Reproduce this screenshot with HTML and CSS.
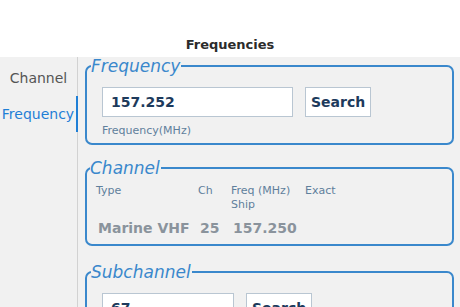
FILE: index.html
```html
<!DOCTYPE html>
<html lang="en">
<head>
    <meta charset="UTF-8">
    <meta name="viewport" content="width=device-width, initial-scale=1.0">
    <title>Frequencies</title>
    <link rel="stylesheet" href="styles.css">
</head>
<body>
    <div class="header">
        <h1>Frequencies</h1>
    </div>

    <div class="main">
        <div class="sidebar">
            <div class="tab">Channel</div>
            <div class="tab active">Frequency</div>
        </div>

        <div class="content">
            <fieldset class="group frequency">
                <legend>Frequency</legend>
                <div class="search-row">
                    <input type="text" class="field wide" value="157.252">
                    <button class="btn">Search</button>
                </div>
                <p class="hint">Frequency(MHz)</p>
            </fieldset>

            <fieldset class="group channel">
                <legend>Channel</legend>
                <div class="channel-table">
                    <div class="th">Type</div>
                    <div class="th">Ch</div>
                    <div class="th">Freq (MHz)<br>Ship</div>
                    <div class="th">Exact</div>
                    <div class="td">Marine VHF</div>
                    <div class="td">25</div>
                    <div class="td">157.250</div>
                    <div class="td"></div>
                </div>
            </fieldset>

            <fieldset class="group">
                <legend>Subchannel</legend>
                <div class="search-row">
                    <input type="text" class="field narrow" value="67">
                    <button class="btn">Search</button>
                </div>
            </fieldset>
        </div>
    </div>
</body>
</html>
```

FILE: styles.css
```css
:root {
    --blue: #3a88cc;
    --tab-blue: #1f7fd6;
    --navy: #1d3a5c;
    --label: #5f7f9c;
    --value: #8a939c;
    --bg: #f1f1f1;
}

* {
    box-sizing: border-box;
    margin: 0;
    padding: 0;
}

html, body {
    height: 100%;
}

body {
    font-family: 'DejaVu Sans', sans-serif;
    background-color: var(--bg);
    color: #333;
    overflow: hidden;
}

.header {
    height: 57px;
    background: white;
    text-align: center;
    padding-top: 37px;
}

h1 {
    font-size: 13px;
    font-weight: 700;
    color: #2b2b2b;
    line-height: 16px;
}

.main {
    display: flex;
    height: 250px;
}

.sidebar {
    width: 78px;
    border-right: 1px solid #d2d2d2;
    padding-top: 3px;
    flex-shrink: 0;
}

.tab {
    height: 36px;
    line-height: 36px;
    text-align: center;
    font-size: 14px;
    color: #555;
}

.tab.active {
    color: var(--tab-blue);
    border-right: 2px solid var(--tab-blue);
    margin-right: -1px;
}

.content {
    flex: 1;
    padding: 0 6px 0 7px;
}

.group {
    border: 2px solid var(--blue);
    border-radius: 7px;
    padding: 12px 16px 5px 15px;
    margin-bottom: 17px;
}

.group.frequency {
    margin-bottom: 14px;
}

.group legend {
    font-family: 'DejaVu Sans', sans-serif;
    font-style: italic;
    font-size: 17px;
    line-height: 18px;
    color: var(--blue);
    margin-left: -11px;
    padding: 0 1px 0 0;
}

.search-row {
    display: flex;
    gap: 12px;
}

.field {
    height: 30px;
    border: 1px solid #b9c6d2;
    background: white;
    padding: 0 8px;
    font-family: 'DejaVu Sans', sans-serif;
    font-size: 14px;
    font-weight: 700;
    color: var(--navy);
    outline: none;
}

.field.wide {
    width: 191px;
}

.field.narrow {
    width: 132px;
}

.btn {
    height: 30px;
    padding: 0 5px;
    border: 1px solid #b9c6d2;
    background: white;
    font-family: 'DejaVu Sans', sans-serif;
    font-size: 14px;
    font-weight: 700;
    color: var(--navy);
}

.hint {
    margin-top: 7px;
    font-size: 11px;
    line-height: 14px;
    color: var(--label);
}

.group.channel {
    padding: 7px 10px 7px 9px;
}

.group.channel legend {
    margin-left: -6px;
}

.channel-table {
    display: grid;
    grid-template-columns: 102px 33px 74px auto;
}

.th {
    font-size: 11px;
    line-height: 14px;
    color: var(--label);
}

.td {
    padding: 7px 0 0 2px;
    font-size: 14px;
    line-height: 18px;
    font-weight: 700;
    color: var(--value);
}
```
